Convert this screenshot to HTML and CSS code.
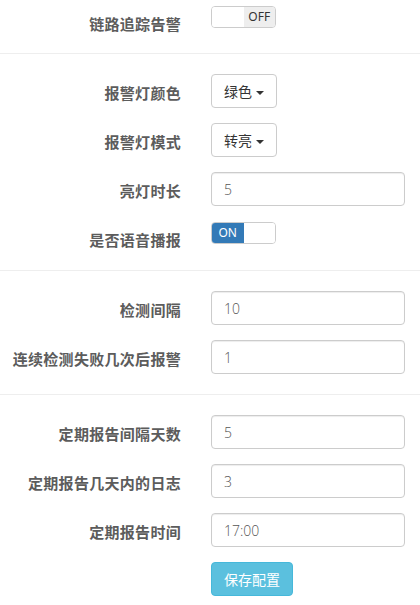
FILE: index.html
```html
<!DOCTYPE html>
<html lang="zh-CN">
<head>
<meta charset="utf-8">
<title>告警配置</title>
<link rel="stylesheet" href="styles.css">
</head>
<body>
<form class="form">
  <div class="section section-first">
    <div class="row row-switch">
      <label class="label">链路追踪告警</label>
      <div class="control">
        <div class="switch switch-off">
          <span class="sw-half sw-blank"></span>
          <span class="sw-half sw-off">OFF</span>
        </div>
      </div>
    </div>
  </div>

  <div class="section">
    <div class="row">
      <label class="label">报警灯颜色</label>
      <div class="control">
        <button type="button" class="btn btn-default">绿色 <span class="caret"></span></button>
      </div>
    </div>
    <div class="row">
      <label class="label">报警灯模式</label>
      <div class="control">
        <button type="button" class="btn btn-default">转亮 <span class="caret"></span></button>
      </div>
    </div>
    <div class="row">
      <label class="label">亮灯时长</label>
      <div class="control">
        <input class="input" type="text" value="5">
      </div>
    </div>
    <div class="row row-switch">
      <label class="label">是否语音播报</label>
      <div class="control">
        <div class="switch switch-on">
          <span class="sw-half sw-on">ON</span>
          <span class="sw-half sw-blank"></span>
        </div>
      </div>
    </div>
  </div>

  <div class="section">
    <div class="row">
      <label class="label">检测间隔</label>
      <div class="control">
        <input class="input" type="text" value="10">
      </div>
    </div>
    <div class="row">
      <label class="label">连续检测失败几次后报警</label>
      <div class="control">
        <input class="input" type="text" value="1">
      </div>
    </div>
  </div>

  <div class="section section-last">
    <div class="row">
      <label class="label">定期报告间隔天数</label>
      <div class="control">
        <input class="input" type="text" value="5">
      </div>
    </div>
    <div class="row">
      <label class="label">定期报告几天内的日志</label>
      <div class="control">
        <input class="input" type="text" value="3">
      </div>
    </div>
    <div class="row">
      <label class="label">定期报告时间</label>
      <div class="control">
        <input class="input" type="text" value="17:00">
      </div>
    </div>
    <div class="row">
      <div class="label"></div>
      <div class="control">
        <button type="button" class="btn btn-info">保存配置</button>
      </div>
    </div>
  </div>
</form>
</body>
</html>
```

FILE: styles.css
```css
* {
  box-sizing: border-box;
}

html, body {
  margin: 0;
  padding: 0;
  background: #fff;
}

body {
  font-family: "Noto Sans", "Noto Sans CJK SC", sans-serif;
  font-size: 14px;
  color: #333;
  width: 420px;
  overflow: hidden;
}

.form {
  margin: 0;
}

.section {
  padding: 20px 0;
  border-bottom: 1px solid #eee;
}

.section-first {
  padding-top: 5px;
  padding-bottom: 19px;
}

.section-last {
  border-bottom: none;
}

.row {
  display: flex;
  align-items: flex-start;
  min-height: 34px;
  margin-bottom: 15px;
}

.row:last-child {
  margin-bottom: 0;
}

.row-switch {
  min-height: 29px;
}

.label {
  width: 196px;
  flex: none;
  padding: 9px 15px 0 0;
  text-align: right;
  font-family: "Noto Sans CJK SC", sans-serif;
  font-size: 15px;
  font-weight: bold;
  letter-spacing: 0.3px;
  line-height: 20px;
  color: #5c5c5c;
}

.control {
  flex: 1;
  padding: 0 15px;
}

.input {
  display: block;
  width: 100%;
  height: 34px;
  padding: 6px 12px;
  font-family: "Open Sans", "Noto Sans CJK SC", sans-serif;
  font-size: 14px;
  font-weight: 300;
  line-height: 20px;
  color: #555;
  background: #fff;
  border: 1px solid #ccc;
  border-radius: 4px;
  box-shadow: inset 0 1px 1px rgba(0, 0, 0, 0.075);
  outline: none;
}

.btn {
  display: inline-block;
  height: 34px;
  padding: 6px 12px;
  font-family: "Noto Sans CJK SC", sans-serif;
  font-size: 14px;
  line-height: 20px;
  border: 1px solid transparent;
  border-radius: 4px;
  cursor: pointer;
  white-space: nowrap;
}

.btn-default {
  color: #333;
  background: #fff;
  border-color: #ccc;
}

.btn-info {
  color: #fff;
  background: #5bc0de;
  border-color: #46b8da;
}

.caret {
  display: inline-block;
  width: 0;
  height: 0;
  margin-left: 1px;
  vertical-align: middle;
  border-top: 4px solid #333;
  border-left: 4px solid transparent;
  border-right: 4px solid transparent;
}

.switch {
  display: flex;
  width: 65px;
  height: 22px;
  margin-top: 1px;
  border: 1px solid #ccc;
  border-radius: 4px;
  overflow: hidden;
  background: #fff;
}

.sw-half {
  width: 32px;
  height: 100%;
  font-family: "Noto Sans", sans-serif;
  font-size: 12px;
  line-height: 20px;
  text-align: center;
}

.sw-blank {
  background: #fff;
}

.sw-off {
  background: #eee;
  color: #333;
}

.sw-on {
  background: #337ab7;
  color: #fff;
}
```
